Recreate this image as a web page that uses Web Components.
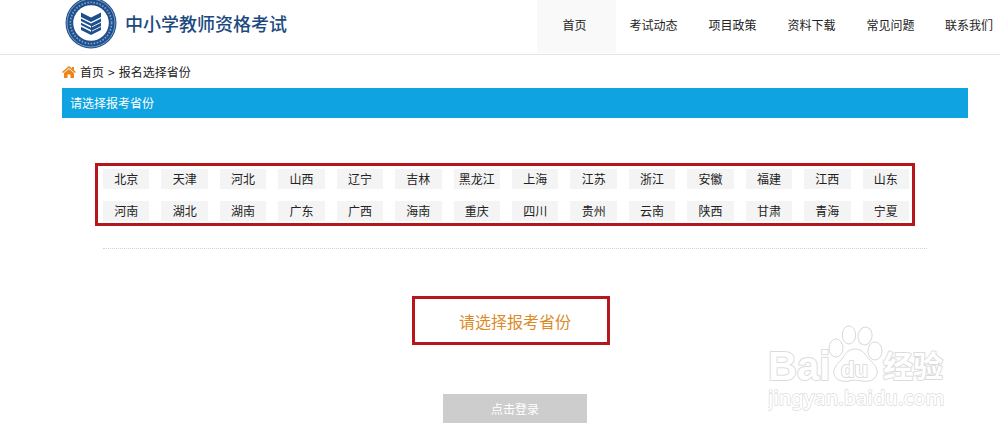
<!DOCTYPE html>
<html lang="zh-CN">
<head>
<meta charset="utf-8">
<title>中小学教师资格考试</title>
<style>
  body { margin: 0; background: #fff; color: #222; font: 12px/20px "Noto Sans CJK SC", sans-serif; }
</style>
</head>
<body>
<exam-page></exam-page>
<script>
const define = (name, html, setup) => customElements.define(name, class extends HTMLElement {
  constructor() {
    super();
    const t = document.createElement('template');
    t.innerHTML = html;
    this.attachShadow({ mode: 'open' }).append(t.content.cloneNode(true));
  }
  connectedCallback() { if (setup) setup(this, this.shadowRoot); }
});

define('exam-brand', `
<style>
  :host { display: block; }
  a { display: flex; align-items: center; gap: 8px; color: #1c4a80; text-decoration: none; font-size: 18px; line-height: 24px; font-weight: 500; }
  svg { display: block; flex: none; }
</style>
<a href="#"><svg width="52" height="52" viewBox="0 0 52 52" aria-hidden="true">
  <circle cx="26" cy="26" r="25.5" fill="#1d4f8c"/>
  <circle cx="26" cy="26" r="24" fill="none" stroke="#a9c0da" stroke-width=".7"/>
  <circle cx="26" cy="26" r="20.6" fill="none" stroke="#7d9fc8" stroke-width="1.8" stroke-dasharray="1.6 1.5" pathLength="129"/>
  <circle cx="26" cy="26" r="17.8" fill="#fff"/>
  <g fill="#1d4f8c">
    <path d="M16 15.5L26 20.5L36 15.5V20L26 25L16 20Z"/>
    <path d="M16 21.5L26 26.5V29L16 24Z M16 25.8L26 30.8V33L16 28Z M16 29.8L26 34.8V38L16 33Z"/>
    <path d="M26 26.5L36 21.5V33L26 38Z"/>
  </g>
  <path d="M27 29.8L36 25.3M27 34L36 29.5" stroke="#fff" stroke-width=".9"/>
</svg><span>中小学教师资格考试</span></a>`);

define('exam-nav', `
<style>
  :host { display: block; }
  nav { display: flex; height: 100%; }
  a { box-sizing: border-box; width: 79px; padding: 15px 4px 0 0; text-align: center; color: #222; text-decoration: none; white-space: nowrap; }
  a[aria-current] { background: #f9f9f9; }
  a:last-child { width: 68px; padding: 15px 0 0 6px; }
</style>
<nav><a href="#" aria-current="page">首页</a><a href="#">考试动态</a><a href="#">项目政策</a><a href="#">资料下载</a><a href="#">常见问题</a><a href="#">联系我们</a></nav>`);

define('exam-header', `
<style>
  :host { display: flex; justify-content: space-between; height: 54px; padding-left: 65px; border-bottom: 1px solid #e5e5e5; overflow: hidden; }
  exam-brand { margin-top: -3px; }
  exam-nav { height: 53px; }
</style>
<exam-brand></exam-brand><exam-nav></exam-nav>`);

define('bread-crumb', `
<style>
  :host { display: flex; align-items: center; gap: 4px; height: 33px; }
  svg { flex: none; }
  a { color: #222; text-decoration: none; }
</style>
<svg width="14" height="12" viewBox="0 0 14 12" aria-hidden="true"><path d="M7 0L0 6L1 7L7 2L13 7L14 6L12 4.2V1H10V2.6Z M2 7L7 3L12 7V12H8.5V8.5H5.5V12H2Z" fill="#ec861b"/></svg>
<a href="#">首页</a><span>&gt;</span><span>报名选择省份</span>`);

define('section-title', `
<style>
  :host { display: block; background: #0fa3e2; color: #fff; }
  h1 { margin: 0; padding: 5px 8px; font-size: 12px; line-height: 20px; font-weight: 400; }
</style>
<h1><slot></slot></h1>`);

define('province-grid', `
<style>
  :host { display: grid; grid-template-columns: repeat(14, 1fr); gap: 12px; padding: 3px 3px 2px 5px; border: 3px solid #b5171c; }
  button { min-width: 0; height: 20px; padding: 0; border: 0; background: #f4f4f4; color: #222; font: inherit; line-height: 20px; white-space: nowrap; cursor: pointer; }
</style>`, (host, root) => {
  for (const name of host.getAttribute('names').split(' ')) {
    const b = document.createElement('button');
    b.type = 'button';
    b.textContent = name;
    root.append(b);
  }
});

define('chosen-province', `
<style>
  :host { display: block; box-sizing: border-box; width: 198px; padding: 10px 0 9px 8px; border: 3px solid #b5171c; color: #dc8a28; font-size: 16px; line-height: 24px; text-align: center; }
  p { margin: 0; }
</style>
<p><slot></slot></p>`);

define('login-button', `
<style>
  :host { display: block; }
  button { display: block; width: 144px; height: 29px; padding: 0; border: 0; background: #cdcdcd; color: #fff; font: inherit; }
</style>
<button type="button"><slot></slot></button>`);

define('baidu-mark', `
<style>
  :host { display: block; pointer-events: none; }
  svg { display: block; }
  text { fill: #fff; stroke: #dcdcdc; stroke-width: 2; stroke-linejoin: round; paint-order: stroke; }
  .latin { font-family: "Liberation Sans", sans-serif; font-weight: 700; }
  .cjk { font-family: "Noto Sans CJK SC", sans-serif; font-weight: 700; }
  .site { font-family: "Noto Sans", sans-serif; font-weight: 500; stroke-width: 1.4; }
</style>
<svg width="190" height="95" viewBox="0 0 190 95">
  <g fill="#fff" stroke="#d9d9d9">
    <ellipse cx="68" cy="24" rx="7" ry="9"/>
    <ellipse cx="81" cy="11" rx="6.7" ry="9"/>
    <ellipse cx="97" cy="12" rx="7" ry="9" transform="rotate(10 97 12)"/>
    <ellipse cx="107" cy="27" rx="7" ry="9"/>
    <path d="M87 25C79 25 77 31 73 36C68 41 65 45 66 50C68 57 75 58 81 57C85 56 90 56 94 57C100 58 107 57 109 50C110 44 107 41 102 36C97 31 95 25 87 25Z"/>
  </g>
  <text class="latin" x="0" y="56" font-size="40">Bai</text>
  <text class="latin" x="73" y="53" font-size="22">du</text>
  <text class="cjk" x="115" y="53" font-size="30">经验</text>
  <text class="site" x="0" y="81" font-size="20">jingyan.baidu.com</text>
</svg>`);

define('exam-page', `
<style>
  :host { display: block; position: relative; min-height: 433px; overflow: hidden; }
  main { display: flex; flex-direction: column; margin: 0 32px 0 62px; }
  province-grid { margin: 45px 53px 0 33px; }
  hr { align-self: stretch; margin: 22px 41px 0; border: 0; border-top: 1px dotted #d4d4d4; }
  chosen-province { align-self: center; margin: 47px 8px 0 0; }
  login-button { align-self: center; margin: 49px 0 10px; }
  baidu-mark { position: absolute; right: 42px; bottom: 14px; }
</style>
<exam-header></exam-header>
<main>
  <bread-crumb></bread-crumb>
  <section-title>请选择报考省份</section-title>
  <province-grid names="北京 天津 河北 山西 辽宁 吉林 黑龙江 上海 江苏 浙江 安徽 福建 江西 山东 河南 湖北 湖南 广东 广西 海南 重庆 四川 贵州 云南 陕西 甘肃 青海 宁夏"></province-grid>
  <hr>
  <chosen-province>请选择报考省份</chosen-province>
  <login-button>点击登录</login-button>
</main>
<baidu-mark></baidu-mark>`);
</script>
</body>
</html>
